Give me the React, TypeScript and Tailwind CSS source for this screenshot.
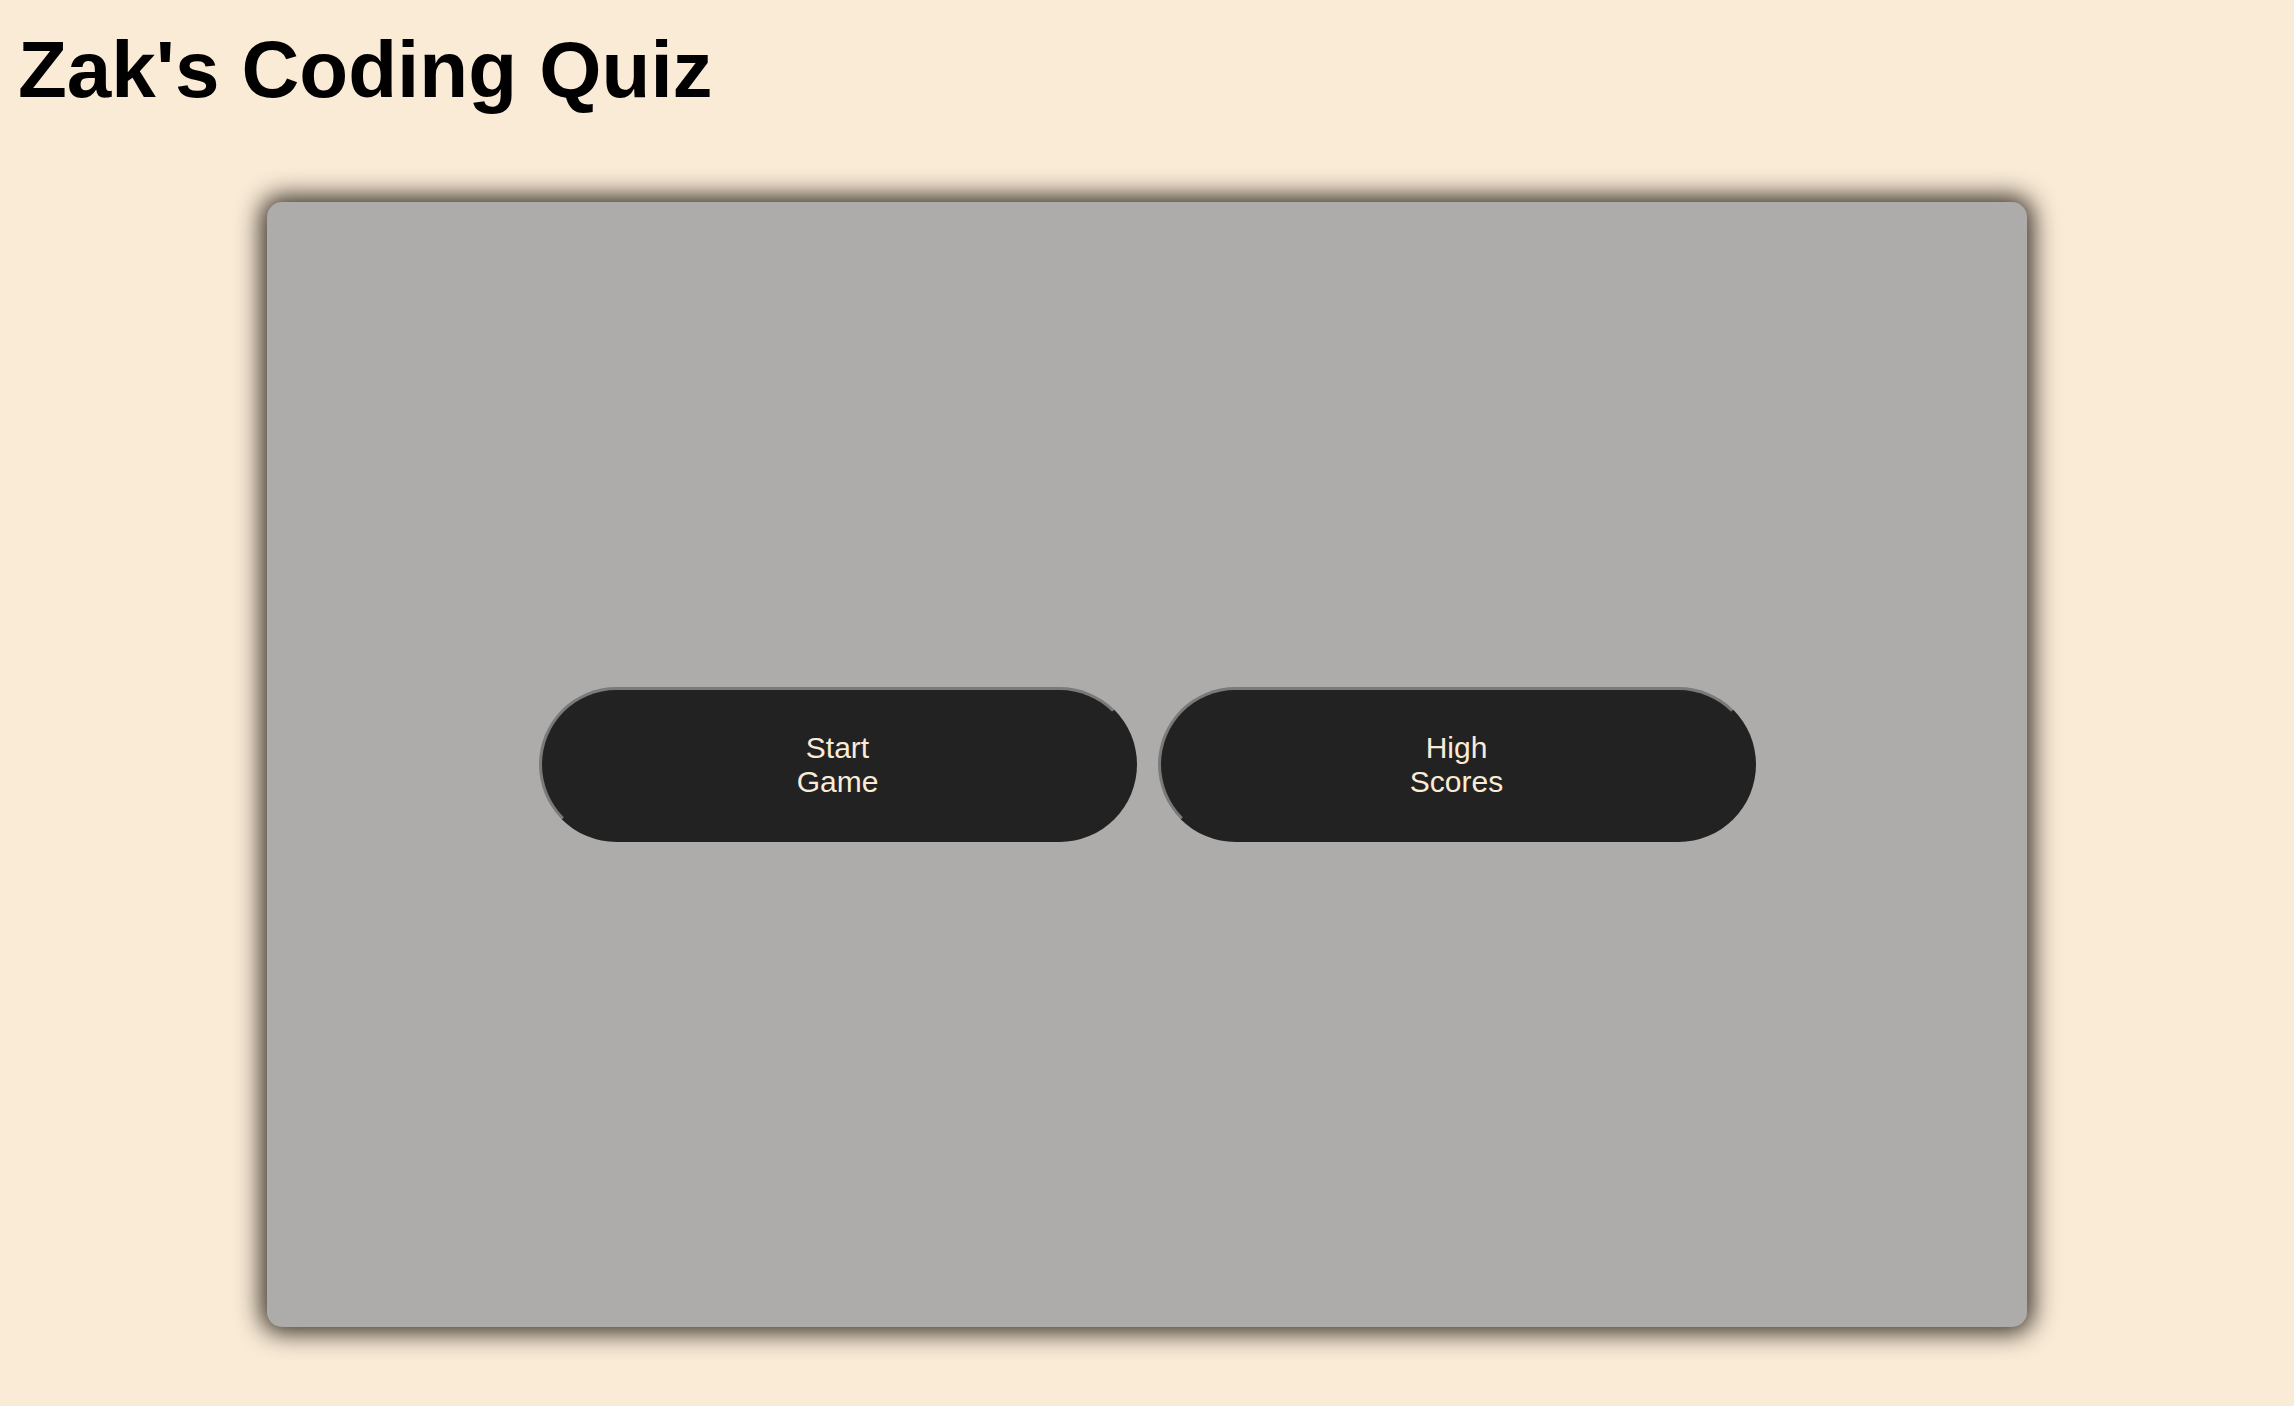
export default function App() {
  return (
    <div
      className="min-h-screen w-full bg-[#faebd7] overflow-hidden"
      style={{ fontFamily: '"Liberation Sans", Arial, sans-serif' }}
    >
      <h1 className="pt-[24px] pl-[18px] text-[80px] leading-[92px] font-bold text-black">
        Zak's Coding Quiz
      </h1>
      <div className="mx-auto mt-[86px] flex h-[1125px] w-[1760px] items-center justify-center gap-[21px] rounded-[15px] bg-[#adacaa] shadow-[0_0_24px_6px_rgba(20,14,8,0.85)]">
        <button className="flex h-[155px] w-[598px] items-center justify-center rounded-full border-[3px] border-t-[#7a7a7a] border-l-[#7a7a7a] border-r-[#222222] border-b-[#222222] bg-[#222222] text-[30px] leading-[34px] text-[#faebd7]">
          Start
          <br />
          Game
        </button>
        <button className="flex h-[155px] w-[598px] items-center justify-center rounded-full border-[3px] border-t-[#7a7a7a] border-l-[#7a7a7a] border-r-[#222222] border-b-[#222222] bg-[#222222] text-[30px] leading-[34px] text-[#faebd7]">
          High
          <br />
          Scores
        </button>
      </div>
    </div>
  );
}
